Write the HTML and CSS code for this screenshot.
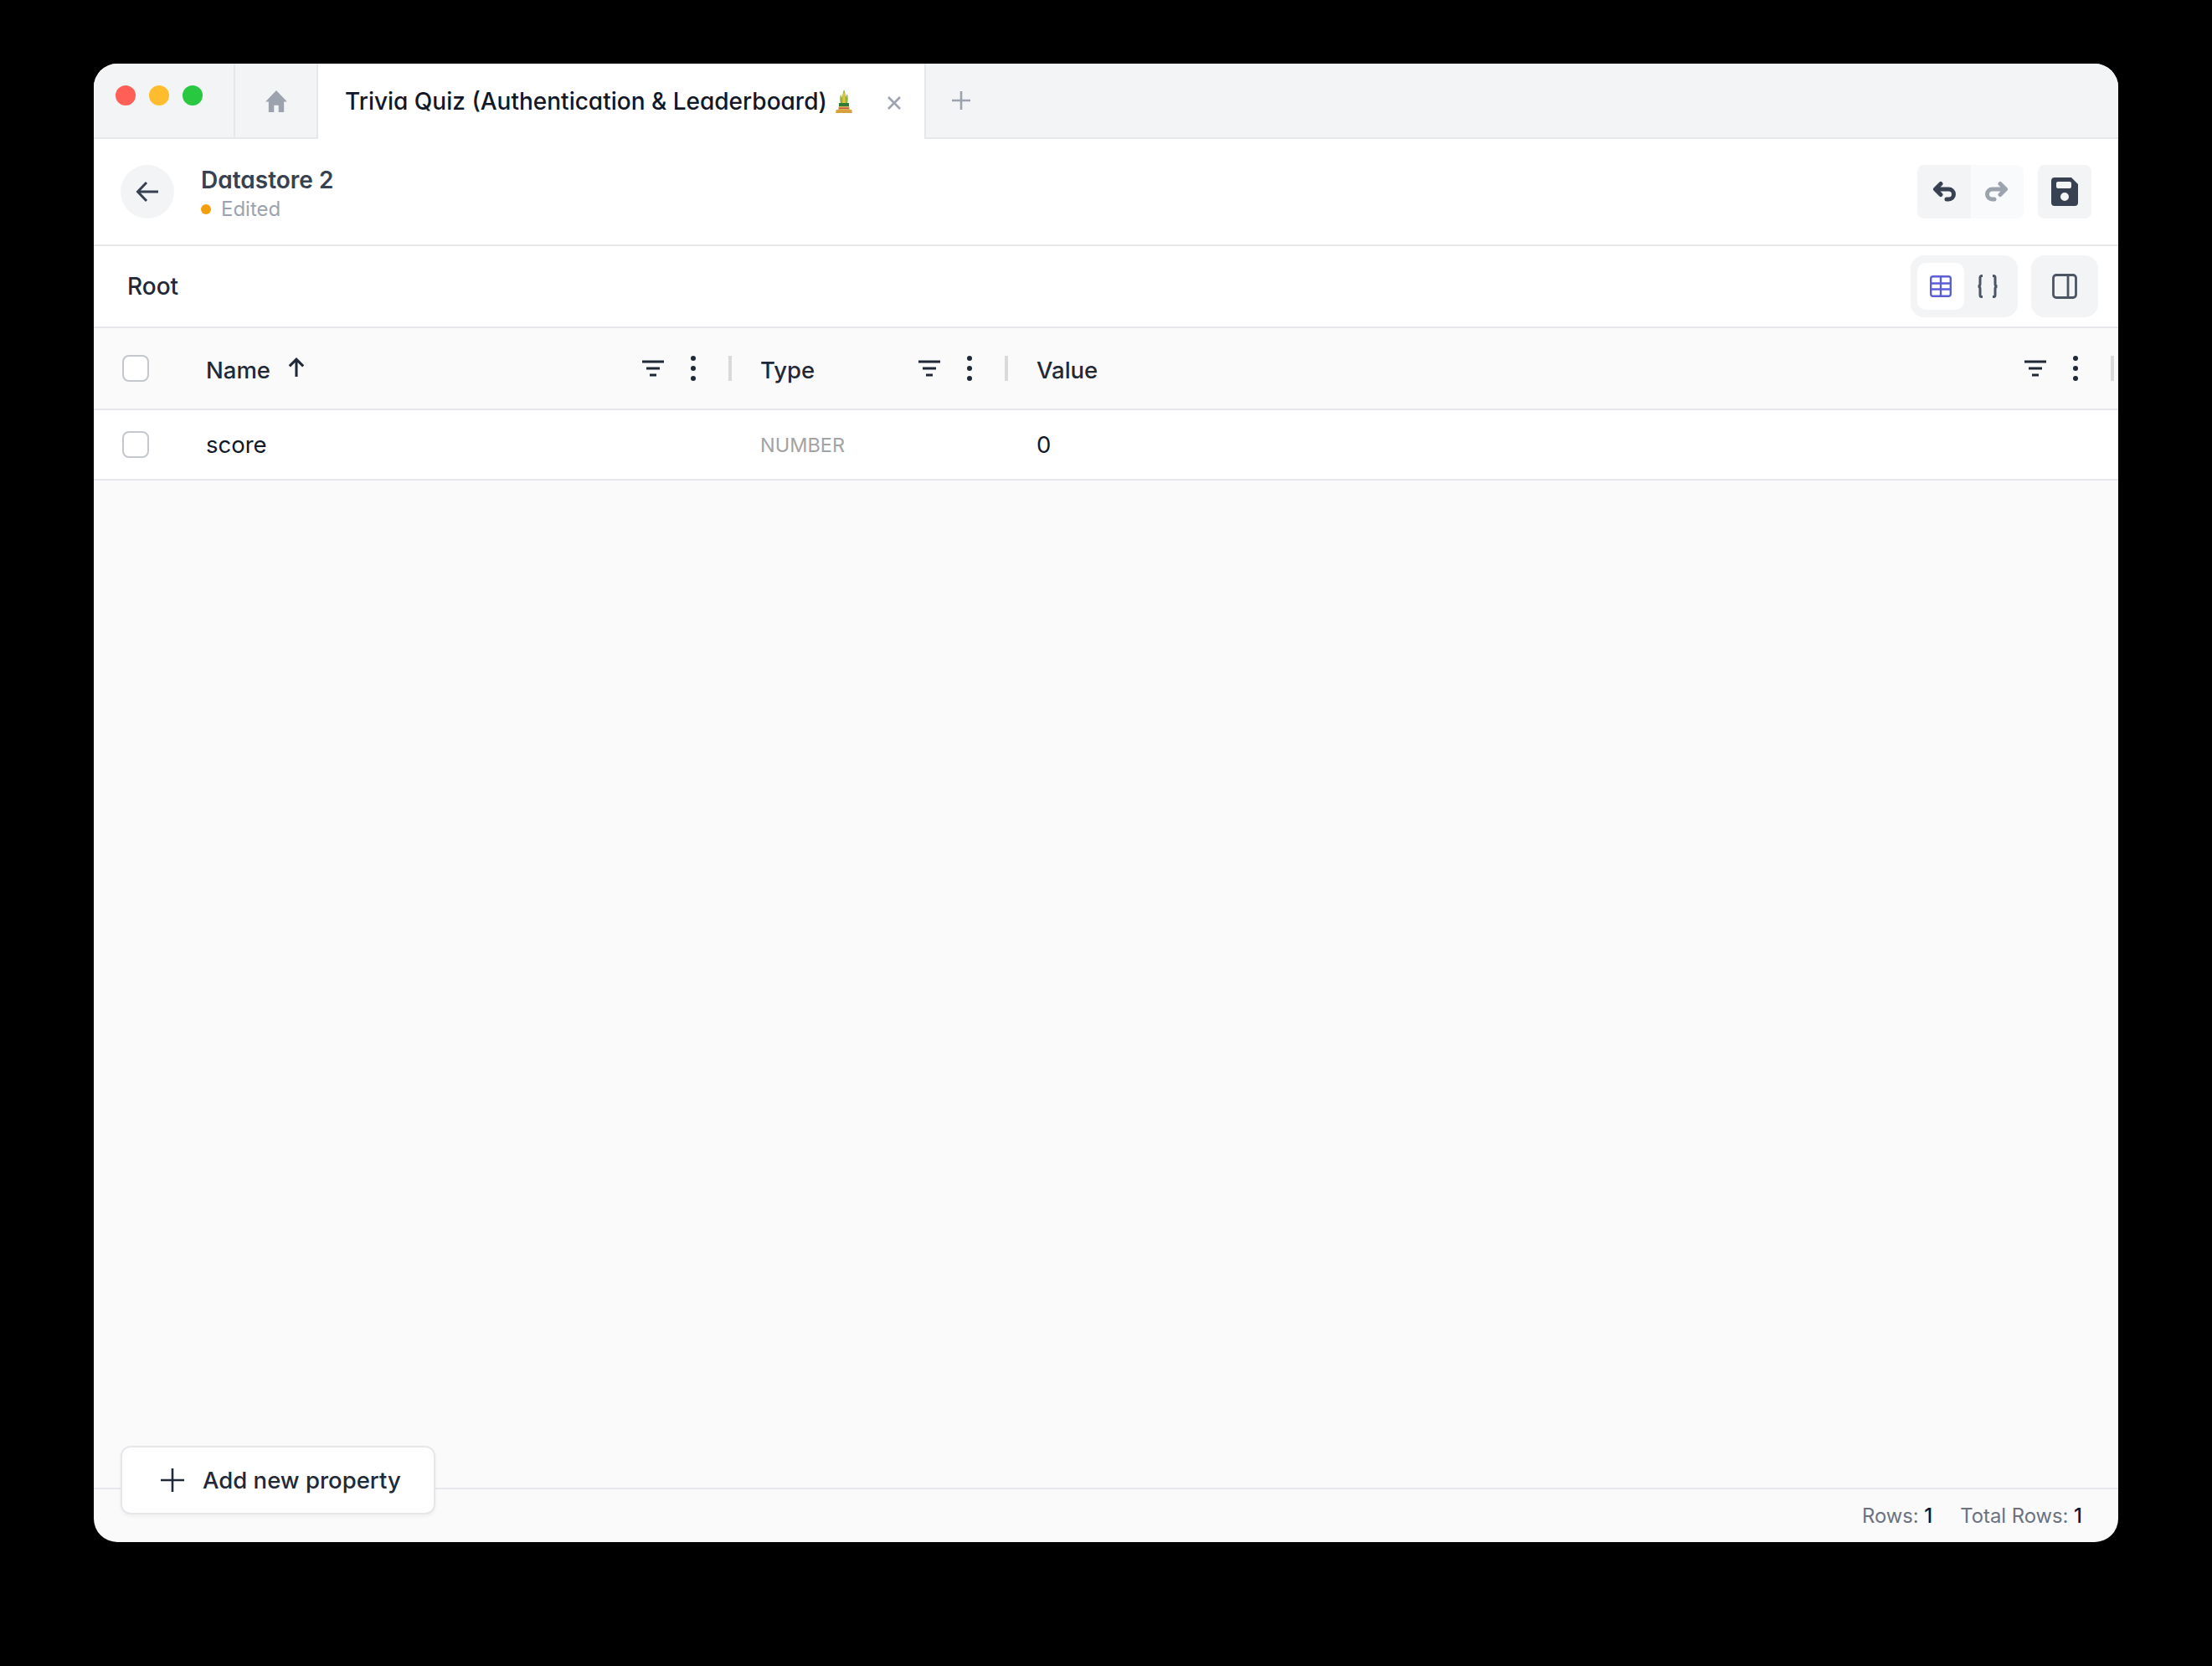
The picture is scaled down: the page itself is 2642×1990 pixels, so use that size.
FILE: index.html
```html
<!DOCTYPE html>
<html lang="en">
<head>
<meta charset="utf-8">
<title>Datastore 2</title>
<link rel="stylesheet" href="styles.css">
</head>
<body>
<div class="window">
  <div class="tabbar">
    <div class="lights"><span class="light red"></span><span class="light yellow"></span><span class="light green"></span></div>
    <div class="home-tab">
      <svg class="home-icon" viewBox="0 0 26 26"><path d="M13 1 1 13.500h3.500V25h6v-7.500h5V25h6V13.500H25z" fill="#9ca3af"/></svg>
    </div>
    <div class="tab">
      <span class="tab-title">Trivia Quiz (Authentication &amp; Leaderboard)</span>
      <svg class="tab-emoji" viewBox="0 0 20 28">
        <path d="M10 0c1 3 2 5 2 9l2-4c1 4 1 8 0 12H6C5 13 5 9 6 6l2 4c0-4 1-7 2-10z" fill="#8db33a"/>
        <path d="M9 4h2l1 13H8z" fill="#e8c23c"/>
        <path d="M4 16h12v4H4z" fill="#2f7d32"/>
        <path d="M4 20h12l1 4H3z" fill="#d9b25c"/>
        <path d="M4 21.500h12v1.500H4z" fill="#c8563a"/>
        <path d="M1 24h18l1 3a1 1 0 0 1-1 1H1a1 1 0 0 1-1-1z" fill="#d6a23f"/>
      </svg>
      <svg class="tab-close" viewBox="0 0 18 18"><path d="M2 2l14 14M16 2 2 16" stroke="#9ca3af" stroke-width="2.600" fill="none"/></svg>
    </div>
    <div class="tab-rest">
      <svg class="tab-plus" viewBox="0 0 24 24"><path d="M12 1v22M1 12h22" stroke="#9ca3af" stroke-width="2.600" fill="none"/></svg>
    </div>
  </div>

  <header class="page-head">
    <div class="back">
      <svg class="back-icon" viewBox="0 0 28 28"><path d="M13 3 2.500 14 13 25M3 14h24" stroke="#374151" stroke-width="3" fill="none"/></svg>
    </div>
    <div class="head-text">
      <div class="head-title">Datastore 2</div>
      <div class="head-status"><span class="status-dot"></span><span>Edited</span></div>
    </div>
    <div class="head-actions">
      <div class="undo-group">
        <div class="undo-btn">
          <svg class="hist-icon" viewBox="0 0 30 26"><path d="M10 3.500 3.500 10l6.500 6.500M4 10h15.500a6 6 0 0 1 0 12H17" stroke="#374151" stroke-width="5" stroke-linecap="round" stroke-linejoin="round" fill="none"/></svg>
        </div>
        <div class="redo-btn">
          <svg class="hist-icon" viewBox="0 0 30 26"><path d="M20 3.500l6.500 6.500-6.500 6.500M26 10H10.500a6 6 0 0 0 0 12H13" stroke="#9ca3af" stroke-width="5" stroke-linecap="round" stroke-linejoin="round" fill="none"/></svg>
        </div>
      </div>
      <div class="save-btn">
        <svg class="save-icon" viewBox="0 0 32 34"><path fill-rule="evenodd" d="M4 0h20l8 8v22a4 4 0 0 1-4 4H4a4 4 0 0 1-4-4V4a4 4 0 0 1 4-4zm4 5a2 2 0 0 0-2 2v4a2 2 0 0 0 2 2h14a2 2 0 0 0 2-2V7a2 2 0 0 0-2-2zm8 13a5 5 0 1 0 0 10 5 5 0 0 0 0-10z" fill="#374151"/></svg>
      </div>
    </div>
  </header>

  <div class="toolbar">
    <span class="crumb">Root</span>
    <div class="view-switch">
      <div class="view-opt view-active">
        <svg class="table-icon" viewBox="0 0 26 26"><rect x="1.200" y="1.200" width="23.600" height="23.600" rx="2.500" stroke="#5b5fd6" stroke-width="2.400" fill="none"/><path d="M1 9.500h24M1 16.500h24M13 1v24" stroke="#5b5fd6" stroke-width="2.400" fill="none"/></svg>
      </div>
      <div class="view-opt">
        <svg class="brace-icon" viewBox="0 0 26 28"><path d="M7 1.500H6a2 2 0 0 0-2 2V11c0 2-1 3-2.500 3C3 14 4 15 4 17v7.500a2 2 0 0 0 2 2h1M19 1.500h1a2 2 0 0 1 2 2V11c0 2 1 3 2.500 3-1.500 0-2.500 1-2.500 3v7.500a2 2 0 0 1-2 2h-1" stroke="#4b5563" stroke-width="3" fill="none"/></svg>
      </div>
    </div>
    <div class="panel-btn">
      <svg class="panel-icon" viewBox="0 0 30 30"><rect x="1.500" y="1.500" width="27" height="27" rx="3.500" stroke="#4b5563" stroke-width="2.800" fill="none"/><path d="M19 1v28" stroke="#4b5563" stroke-width="2.800"/></svg>
    </div>
  </div>

  <div class="grid grid-head">
    <div class="cell-check"><span class="checkbox"></span></div>
    <div class="head-cell">
      <span class="col-name">Name</span>
      <svg class="sort-icon" viewBox="0 0 22 22"><path d="M11 21V2M3.500 9.500 11 2l7.500 7.500" stroke="#1f2937" stroke-width="2.800" fill="none"/></svg>
      <span class="spacer"></span>
      <svg class="filter-icon" viewBox="0 0 26 20"><path d="M0 2h26M5 10h16M9 18h8" stroke="#1f2937" stroke-width="2.800"/></svg>
      <svg class="dots-icon" viewBox="0 0 6 30"><circle cx="3" cy="3" r="3"/><circle cx="3" cy="15" r="3"/><circle cx="3" cy="27" r="3"/></svg>
      <span class="resizer"></span>
    </div>
    <div class="head-cell">
      <span class="col-name">Type</span>
      <span class="spacer"></span>
      <svg class="filter-icon" viewBox="0 0 26 20"><path d="M0 2h26M5 10h16M9 18h8" stroke="#1f2937" stroke-width="2.800"/></svg>
      <svg class="dots-icon" viewBox="0 0 6 30"><circle cx="3" cy="3" r="3"/><circle cx="3" cy="15" r="3"/><circle cx="3" cy="27" r="3"/></svg>
      <span class="resizer"></span>
    </div>
    <div class="head-cell head-cell-last">
      <span class="col-name">Value</span>
      <span class="spacer"></span>
      <svg class="filter-icon" viewBox="0 0 26 20"><path d="M0 2h26M5 10h16M9 18h8" stroke="#1f2937" stroke-width="2.800"/></svg>
      <svg class="dots-icon" viewBox="0 0 6 30"><circle cx="3" cy="3" r="3"/><circle cx="3" cy="15" r="3"/><circle cx="3" cy="27" r="3"/></svg>
      <span class="resizer"></span>
    </div>
  </div>

  <div class="grid grid-row">
    <div class="cell-check"><span class="checkbox"></span></div>
    <div class="cell">score</div>
    <div class="cell cell-type">NUMBER</div>
    <div class="cell">0</div>
  </div>

  <div class="empty"></div>

  <footer class="footer">
    <span class="stat">Rows: <b>1</b></span>
    <span class="stat">Total Rows: <b>1</b></span>
  </footer>

  <button class="add-btn" type="button">
    <svg class="add-icon" viewBox="0 0 28 28"><path d="M14 0v28M0 14h28" stroke="#1f2937" stroke-width="2.600"/></svg>
    <span>Add new property</span>
  </button>
</div>
</body>
</html>
```

FILE: styles.css
```css
* { box-sizing: border-box; }
html, body { margin: 0; height: 100%; }
body {
  background: #000;
  padding: 76px 112px 148px;
  font-family: Inter, "Noto Sans", sans-serif;
  color: #111827;
}
.window {
  position: relative;
  width: 2418px;
  height: 1766px;
  background: #fafafa;
  border-radius: 28px;
  overflow: hidden;
  display: flex;
  flex-direction: column;
}
svg { display: block; flex: none; }

/* tab bar */
.tabbar { display: flex; height: 90px; flex: none; }
.lights {
  width: 169px;
  background: #f3f4f6;
  border-right: 2px solid #e5e7eb;
  border-bottom: 2px solid #e5e7eb;
  display: flex;
  gap: 16px;
  padding: 26px 0 0 26px;
}
.light { width: 24px; height: 24px; border-radius: 50%; }
.red { background: #ff5f57; }
.yellow { background: #febc2e; }
.green { background: #28c840; }
.home-tab {
  width: 99px;
  background: #f3f4f6;
  border-right: 2px solid #e5e7eb;
  border-bottom: 2px solid #e5e7eb;
  display: flex;
  align-items: center;
  justify-content: center;
}
.home-icon { width: 30px; height: 28px; margin-top: 1px; }
.tab {
  width: 724px;
  background: #fff;
  display: flex;
  align-items: center;
  padding: 0 0 0 32px;
}
.tab-title {
  font-size: 28px;
  font-weight: 500;
  font-feature-settings: "cv11";
  color: #111827;
  white-space: nowrap;
}
.tab-emoji { width: 20px; height: 28px; margin-left: 10px; }
.tab-close { width: 18px; height: 18px; margin-left: 41px; margin-top: 3px; }
.tab-rest {
  flex: 1;
  background: #f3f4f6;
  border-left: 2px solid #e5e7eb;
  border-bottom: 2px solid #e5e7eb;
  display: flex;
  align-items: center;
  padding-left: 30px;
}
.tab-plus { width: 24px; height: 24px; }

/* page header */
.page-head {
  height: 128px;
  flex: none;
  background: #fff;
  border-bottom: 2px solid #e5e7eb;
  display: flex;
  align-items: center;
  padding: 0 32px;
}
.back {
  width: 64px;
  height: 64px;
  border-radius: 50%;
  background: #f3f4f6;
  display: flex;
  align-items: center;
  justify-content: center;
}
.back-icon { width: 28px; height: 28px; }
.head-text { margin-left: 32px; padding-top: 6px; display: flex; flex-direction: column; }
.head-title {
  font-size: 28px;
  line-height: 36px;
  font-weight: 600;
  font-feature-settings: "cv11";
  color: #374151;
}
.head-status {
  display: flex;
  align-items: center;
  gap: 12px;
  font-size: 24px;
  line-height: 34px;
  color: #9ca3af;
  font-feature-settings: "cv11";
}
.status-dot { width: 12px; height: 12px; border-radius: 50%; background: #f59e0b; }
.head-actions { margin-left: auto; display: flex; gap: 17px; }
.undo-group { display: flex; width: 127px; height: 64px; border-radius: 8px; overflow: hidden; }
.undo-btn, .redo-btn {
  flex: 1;
  display: flex;
  align-items: center;
  justify-content: center;
}
.undo-btn { background: #f3f4f6; padding-left: 2px; }
.redo-btn { background: #f9fafb; padding-right: 2px; }
.hist-icon { width: 30px; height: 26px; }
.save-btn {
  width: 64px;
  height: 64px;
  border-radius: 8px;
  background: #f3f4f6;
  display: flex;
  align-items: center;
  justify-content: center;
}
.save-icon { width: 32px; height: 34px; }

/* toolbar */
.toolbar {
  height: 98px;
  flex: none;
  background: #fff;
  border-bottom: 2px solid #e5e7eb;
  display: flex;
  align-items: center;
  padding: 0 24px 0 40px;
}
.crumb { font-size: 28px; font-weight: 500; color: #1f2937; font-feature-settings: "cv11"; margin-right: auto; }
.view-switch {
  width: 128px;
  height: 74px;
  border-radius: 16px;
  background: #f3f4f6;
  display: flex;
  align-items: center;
  padding: 0 8px;
}
.view-opt {
  width: 56px;
  height: 56px;
  border-radius: 10px;
  display: flex;
  align-items: center;
  justify-content: center;
}
.view-active { background: #fff; }
.table-icon { width: 26px; height: 26px; }
.brace-icon { width: 26px; height: 28px; }
.panel-btn {
  margin-left: 16px;
  width: 80px;
  height: 74px;
  border-radius: 16px;
  background: #f3f4f6;
  display: flex;
  align-items: center;
  justify-content: center;
}
.panel-icon { width: 30px; height: 30px; }

/* table */
.grid {
  display: grid;
  grid-template-columns: 134px 662px 330px 1fr;
  flex: none;
  border-bottom: 2px solid #e5e7eb;
}
.grid-head { height: 98px; background: #fafafa; }
.grid-row { height: 84px; background: #fff; }
.cell-check { display: flex; align-items: center; padding-left: 34px; }
.checkbox {
  width: 32px;
  height: 32px;
  background: #fff;
  border: 2px solid #c4c7cc;
  border-radius: 8px;
}
.head-cell {
  display: flex;
  align-items: center;
  padding-right: 34px;
}
.head-cell-last { padding-right: 5px; }
.col-name {
  font-size: 27.500px;
  font-weight: 500;
  color: #1f2937;
  margin-top: 3px;
}
.sort-icon { width: 24px; height: 24px; margin: 0 0 2px 19px; }
.spacer { flex: 1; }
.filter-icon { width: 26px; height: 20px; }
.dots-icon { width: 6px; height: 30px; margin: 0 0 0 32px; fill: #1f2937; }
.resizer { width: 4px; height: 30px; margin: 0 0 0 39px; background: #d9dadc; }
.cell {
  display: flex;
  align-items: center;
  font-size: 27.500px;
  font-weight: 400;
  color: #111827;
}
.cell-type { font-size: 23.500px; color: #a3a3a3; }
.empty { flex: 1; }

/* footer */
.footer {
  height: 65px;
  flex: none;
  border-top: 2px solid #e5e7eb;
  display: flex;
  align-items: center;
  justify-content: flex-end;
  gap: 33px;
  padding: 0 43px 0 0;
}
.stat { font-size: 23.800px; color: #6b7280; }
.stat b { font-weight: 500; color: #111827; }

/* floating add button */
.add-btn {
  position: absolute;
  left: 32px;
  bottom: 33px;
  width: 376px;
  height: 82px;
  background: #fff;
  border: 2px solid #e5e7eb;
  border-radius: 12px;
  box-shadow: 0 2px 4px rgba(0, 0, 0, 0.05);
  display: flex;
  align-items: center;
  gap: 22px;
  padding: 0 0 0 46px;
  font-family: inherit;
  font-size: 27.500px;
  font-weight: 500;
  color: #1f2937;
}
.add-icon { width: 28px; height: 28px; }
```
